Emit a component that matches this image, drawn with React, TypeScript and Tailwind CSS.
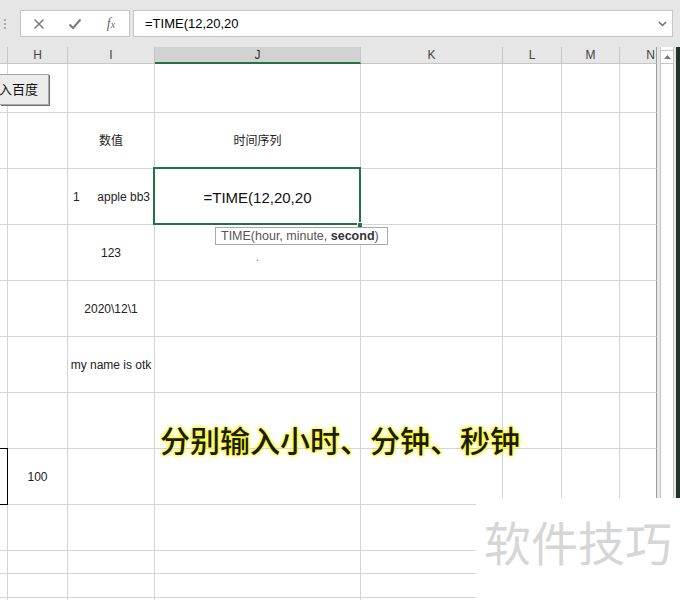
import React from "react";

const cols = [8, 60, 87, 206, 142, 59, 58, 37];
const heads = ["", "H", "I", "J", "K", "L", "M", "N"];
const rowHeights = [49, 56, 56, 56, 56, 56, 56, 56, 46, 23, 24, 30];

type CellMap = Record<string, React.ReactNode>;

const content: CellMap = {
  "1-2": "数值",
  "1-3": "时间序列",
  "2-2": (
    <div className="flex w-full justify-between pl-[5px] pr-[4px]">
      <span>1</span>
      <span>apple bb3</span>
    </div>
  ),
  "2-3": <span className="pt-[4px] text-[15px] text-[#111]">=TIME(12,20,20</span>,
  "3-2": "123",
  "3-3": <span className="pt-[9px] text-[#777]">.</span>,
  "4-2": "2020\\12\\1",
  "5-2": "my name is otk",
  "7-1": "100",
};

export default function App() {
  return (
    <div
      className="relative h-[600px] w-[680px] overflow-hidden bg-white text-[#222]"
      style={{ fontFamily: '"Liberation Sans", "Noto Sans CJK SC", sans-serif' }}
    >
      {/* toolbar */}
      <div className="flex h-[47px] items-start bg-[#e6e6e6] pt-[10px]">
        <div className="flex h-[27px] w-[20px] flex-col items-start justify-center gap-[2px] pl-[4px]">
          <div className="h-[2px] w-[2px] bg-[#a8a8a8]" />
          <div className="h-[2px] w-[2px] bg-[#a8a8a8]" />
          <div className="h-[2px] w-[2px] bg-[#a8a8a8]" />
        </div>
        <div className="flex h-[27px] w-[110px] items-center border border-[#c6c6c6] bg-white">
          <div className="flex w-[36px] justify-center">
            <svg width="12" height="12" viewBox="0 0 12 12">
              <path d="M1.5 1.5 L10.5 10.5 M10.5 1.5 L1.5 10.5" stroke="#7a7a7a" strokeWidth="1.5" fill="none" />
            </svg>
          </div>
          <div className="flex w-[36px] justify-center">
            <svg width="14" height="12" viewBox="0 0 14 12">
              <path d="M1.5 6.5 L5 10 L12.5 1.5" stroke="#7a7a7a" strokeWidth="2" fill="none" />
            </svg>
          </div>
          <div
            className="flex w-[36px] justify-center italic text-[#6a6a6a]"
            style={{ fontFamily: '"Liberation Serif", serif' }}
          >
            <span className="text-[14px] leading-none">f</span>
            <span className="pt-[3px] text-[10px] leading-none">x</span>
          </div>
        </div>
        <div className="ml-[3px] flex h-[27px] w-[540px] items-center justify-between border border-[#c6c6c6] bg-white pl-[11px] pr-[5px]">
          <span className="text-[13px] text-black">=TIME(12,20,20</span>
          <svg width="9" height="6" viewBox="0 0 9 6">
            <path d="M1 1 L4.5 4.5 L8 1" stroke="#6a6a6a" strokeWidth="1.5" fill="none" />
          </svg>
        </div>
      </div>

      <div className="flex">
        {/* grid */}
        <div className="flex w-[657px] flex-col">
          <div className="flex h-[17px]">
            {cols.map((w, i) => (
              <div
                key={i}
                style={{ width: w }}
                className={
                  i === 3
                    ? "flex h-[17px] shrink-0 items-center justify-center border-b-2 border-r border-b-[#217346] border-r-[#c6c6c6] bg-[#d2d2d2] text-[12px] text-[#333]"
                    : i === 7
                    ? "flex h-[17px] shrink-0 items-center justify-end border-b border-r border-b-[#c6c6c6] border-r-[#9e9e9e] bg-[#e6e6e6] pr-[1px] text-[12px] text-[#444]"
                    : "flex h-[17px] shrink-0 items-center justify-center border-b border-r border-[#c6c6c6] bg-[#e6e6e6] text-[12px] text-[#444]"
                }
              >
                {heads[i]}
              </div>
            ))}
          </div>
          {rowHeights.map((h, r) => (
            <div key={r} className="flex" style={{ height: h }}>
              {cols.map((w, c) => (
                <div
                  key={c}
                  style={{ width: w, height: h }}
                  className={
                    c === 7
                      ? "flex shrink-0 items-center justify-center border-b border-r border-b-[#d4d4d4] border-r-[#9e9e9e] text-[12px]"
                      : "flex shrink-0 items-center justify-center border-b border-r border-[#d4d4d4] text-[12px]"
                  }
                >
                  {content[`${r}-${c}`] ?? null}
                </div>
              ))}
            </div>
          ))}
        </div>
        {/* scrollbar */}
        <div className="flex h-[553px] w-[23px]">
          <div className="w-[3px] bg-[#e6e6e6]" />
          <div className="flex w-[14px] flex-col border-l border-r border-[#c6c6c6] bg-white">
            <div className="mt-[3px] flex h-[14px] items-center justify-center border-b border-t border-[#c6c6c6]">
              <svg width="7" height="4" viewBox="0 0 7 4">
                <path d="M0 4 L3.5 0 L7 4 Z" fill="#777" />
              </svg>
            </div>
          </div>
          <div className="w-[2px] bg-[#e6e6e6]" />
          <div className="w-[4px] bg-[#1f3527]" />
        </div>
      </div>

      {/* cut-off button */}
      <div className="absolute left-0 top-[74px] flex h-[31px] w-[49px] items-center justify-end whitespace-nowrap border border-l-0 border-[#a8a8a8] bg-[#ececec] pr-[10px] text-[13px] text-[#111] shadow-[1px_1px_0_#707070]">
        入百度
      </div>

      {/* G cell box */}
      <div className="absolute left-[-1px] top-[448px] h-[57px] w-[9px] border border-black" />

      {/* selected cell */}
      <div className="absolute left-[153px] top-[167px] h-[58px] w-[208px] border-2 border-[#217346]" />
      <div className="absolute left-[357px] top-[222px] h-[6px] w-[6px] border border-white bg-[#217346]" />

      {/* tooltip */}
      <div className="absolute left-[215px] top-[227px] flex h-[18px] w-[173px] items-center border border-[#a8a8a8] bg-white pl-[5px] text-[12.5px] leading-none text-[#555]">
        TIME(hour, minute,&nbsp;<b className="font-bold text-[#333]">second</b>)
      </div>

      {/* caption */}
      <div
        className="absolute left-[160px] top-[424px] text-[30px] font-medium leading-none text-[#1a1a1a] [text-shadow:0_0_2px_#ffff00,0_0_3px_#ffff00,0_0_4px_#f5e800]"
        style={{ fontFamily: '"Noto Sans CJK SC", sans-serif' }}
      >
        分别输入小时、分钟、秒钟
      </div>

      {/* watermark */}
      <div
        className="absolute bottom-0 left-[476px] right-0 top-[498px] bg-white pl-[8px] pt-[19px] text-[47px] leading-none text-[#d6d6d6]"
        style={{ fontFamily: '"Noto Sans CJK SC", sans-serif' }}
      >
        软件技巧
      </div>
    </div>
  );
}
